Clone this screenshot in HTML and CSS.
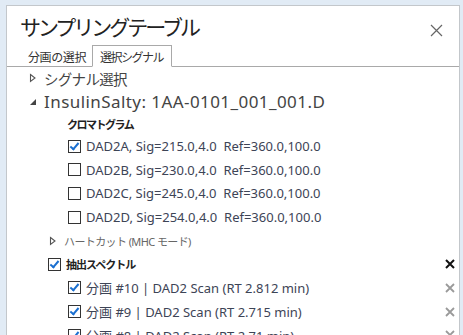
FILE: index.html
```html
<!DOCTYPE html>
<html lang="ja">
<head>
<meta charset="utf-8">
<link rel="stylesheet" href="styles.css">
</head>
<body>
<div class="panel">
  <div class="header">
    <h1 class="title">サンプリングテーブル</h1>
    <svg class="close" width="13" height="13" viewBox="0 0 13 13"><path d="M1 1L12 12M12 1L1 12" stroke="#666" stroke-width="1.2" fill="none"/></svg>
  </div>
  <div class="tabs">
    <div class="tab">分画の選択</div>
    <div class="tab active">選択シグナル</div>
  </div>
  <div class="tree">
    <div class="row lvl0 r1">
      <svg class="tri" width="8" height="10" viewBox="0 0 8 10"><path d="M1.5 1.5L6 5L1.5 8.5Z" fill="none" stroke="#555" stroke-width="1.1"/></svg>
      <span class="bigjp">シグナル選択</span>
    </div>
    <div class="row lvl0 r2">
      <svg class="tri" width="8" height="10" viewBox="0 0 8 10"><path d="M7 2L7 8L1 8Z" fill="#444"/></svg>
      <span class="big">InsulinSalty: 1AA-0101_001_001.D</span>
    </div>
    <div class="row group">クロマトグラム</div>
    <div class="row item"><span class="cb on"></span><span class="lbl">DAD2A, Sig=215.0,4.0&nbsp; Ref=360.0,100.0</span></div>
    <div class="row item"><span class="cb"></span><span class="lbl">DAD2B, Sig=230.0,4.0&nbsp; Ref=360.0,100.0</span></div>
    <div class="row item"><span class="cb"></span><span class="lbl">DAD2C, Sig=245.0,4.0&nbsp; Ref=360.0,100.0</span></div>
    <div class="row item"><span class="cb"></span><span class="lbl">DAD2D, Sig=254.0,4.0&nbsp; Ref=360.0,100.0</span></div>
    <div class="row lvl1">
      <svg class="tri" width="8" height="10" viewBox="0 0 8 10"><path d="M1.5 1.5L6 5L1.5 8.5Z" fill="none" stroke="#555" stroke-width="1.1"/></svg>
      <span class="small">ハートカット (MHC モード)</span>
    </div>
    <div class="row spec">
      <span class="cb on"></span><span class="bold">抽出スペクトル</span>
      <svg class="x dark" width="10" height="10" viewBox="0 0 10 10"><path d="M1 1L9 9M9 1L1 9" stroke="#111" stroke-width="2" fill="none"/></svg>
    </div>
    <div class="row item"><span class="cb on"></span><span class="lbl">分画 #10 | DAD2 Scan (RT 2.812 min)</span>
      <svg class="x" width="10" height="10" viewBox="0 0 10 10"><path d="M1 1L9 9M9 1L1 9" stroke="#9a9a9a" stroke-width="1.8" fill="none"/></svg></div>
    <div class="row item"><span class="cb on"></span><span class="lbl">分画 #9 | DAD2 Scan (RT 2.715 min)</span>
      <svg class="x" width="10" height="10" viewBox="0 0 10 10"><path d="M1 1L9 9M9 1L1 9" stroke="#9a9a9a" stroke-width="1.8" fill="none"/></svg></div>
    <div class="row item"><span class="cb on"></span><span class="lbl">分画 #8 | DAD2 Scan (RT 2.71 min)</span>
      <svg class="x" width="10" height="10" viewBox="0 0 10 10"><path d="M1 1L9 9M9 1L1 9" stroke="#9a9a9a" stroke-width="1.8" fill="none"/></svg></div>
  </div>
</div>
</body>
</html>
```
FILE: styles.css
```css
html, body {
  margin: 0;
  padding: 0;
  height: 100%;
  overflow: hidden;
}
body {
  background: #e1ebf5;
  font-family: "Noto Sans", "Noto Sans CJK JP", sans-serif;
  padding: 5px 3px 0 6px;
  box-sizing: border-box;
}
.panel {
  background: #fff;
  border: 1px solid #c3c7cb;
  border-bottom: none;
  height: 400px;
}
.header {
  display: flex;
  align-items: center;
  justify-content: space-between;
  padding: 2px 16px 0 13px;
  height: 36px;
}
.title {
  margin: 0;
  font-weight: normal;
  font-size: 21px;
  color: #222;
  font-family: "Noto Sans CJK JP", sans-serif;
  letter-spacing: -3px;
  line-height: 30px;
}
.close { margin-top: 8px; }
.tabs {
  display: flex;
  align-items: flex-end;
  padding-left: 16px;
  border-bottom: 1px solid #a9a9a9;
  height: 22px;
}
.tab {
  font-family: "Noto Sans CJK JP", sans-serif;
  font-size: 12px;
  letter-spacing: -0.4px;
  color: #333;
  padding: 0 5px;
  height: 19px;
  line-height: 19px;
}
.tab.active {
  border: 1px solid #a9a9a9;
  border-bottom: 1px solid #fff;
  margin-bottom: -1px;
  height: 20px;
  line-height: 21px;
  padding: 0 8px 0 7px;
  margin-left: 1px;
  letter-spacing: -1.5px;
}
.row {
  display: flex;
  align-items: center;
  position: relative;
}
.lvl0 {
  padding-left: 22px;
}
.r1 { height: 22px; }
.r2 { height: 25px; }
.lvl0 .tri { margin-right: 7px; }
.bigjp {
  font-size: 14.5px;
  letter-spacing: -0.7px;
  color: #444;
  font-family: "Noto Sans CJK JP", sans-serif;
}
.big {
  font-size: 17px;
  letter-spacing: 0.43px;
  color: #444;
}
.group {
  height: 20.5px;
  padding-left: 60px;
  font-family: "Noto Sans CJK JP", sans-serif;
  font-weight: bold;
  font-size: 11px;
  letter-spacing: -1.5px;
  color: #222;
}
.item {
  height: 23.6px;
  padding-left: 61px;
}
.cb {
  width: 11px;
  height: 11px;
  border: 1px solid #333;
  background: #fff;
  flex: none;
  position: relative;
  margin-right: 5px;
}
.cb.on::after {
  content: "";
  position: absolute;
  left: 3px;
  top: 0px;
  width: 3px;
  height: 7px;
  border: solid #1a6fd0;
  border-width: 0 2px 2px 0;
  transform: rotate(40deg);
}
.lbl {
  font-size: 13px;
  color: #3d4456;
}
.lvl1 {
  height: 23.6px;
  padding-left: 42px;
}
.lvl1 .tri { margin-right: 7px; }
.small {
  font-size: 11px;
  letter-spacing: -0.6px;
  color: #666;
}
.spec {
  height: 23.6px;
  padding-left: 41px;
}
.bold {
  font-family: "Noto Sans CJK JP", sans-serif;
  font-weight: bold;
  font-size: 11px;
  letter-spacing: -1px;
  color: #222;
}
.x {
  position: absolute;
  right: 4px;
  top: 7px;
}
```
